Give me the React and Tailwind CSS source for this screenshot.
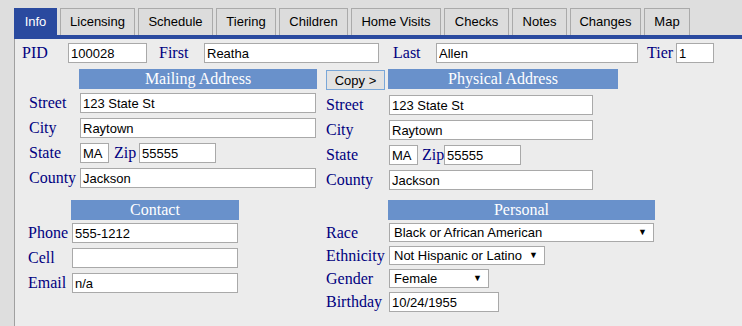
const tabs = [
  { label: 'Info', w: 'w-[43px]', active: true },
  { label: 'Licensing', w: 'w-[75px]' },
  { label: 'Schedule', w: 'w-[75px]' },
  { label: 'Tiering', w: 'w-[60px]' },
  { label: 'Children', w: 'w-[69px]' },
  { label: 'Home Visits', w: 'w-[90px]' },
  { label: 'Checks', w: 'w-[65px]' },
  { label: 'Notes', w: 'w-[55px]' },
  { label: 'Changes', w: 'w-[71px]' },
  { label: 'Map', w: 'w-[46px]' },
]

const serif = "font-['Liberation_Serif','Times_New_Roman',serif]"
const sans = "font-['Liberation_Sans',Arial,sans-serif]"

const Label = ({ children, className = '' }) => (
  <span className={`${serif} text-[16px] leading-[20px] text-[#000080] ${className}`}>{children}</span>
)

const Field = ({ value, className = '' }) => (
  <input
    readOnly
    value={value}
    className={`${sans} h-[20px] border border-[#a9a9a9] bg-white px-[2px] text-[13px] text-black outline-none ${className}`}
  />
)

const Select = ({ value, className = '' }) => (
  <div
    className={`${sans} flex h-[19px] items-center justify-between border border-[#a9a9a9] bg-white pl-[4px] pr-[6px] text-[13px] text-black ${className}`}
  >
    <span>{value}</span>
    <span className="text-[9px] leading-none">▼</span>
  </div>
)

const Header = ({ children, className = '' }) => (
  <div
    className={`${serif} flex h-[20px] items-center justify-center bg-[#6991cb] text-[16px] text-white ${className}`}
  >
    {children}
  </div>
)

const Row = ({ label, labelW, children, className = '' }) => (
  <div className={`flex h-[20px] items-center ${className}`}>
    <Label className={labelW}>{label}</Label>
    {children}
  </div>
)

export default function App() {
  return (
    <div className="flex h-[326px] w-[742px] flex-col overflow-hidden bg-[#dedede] pl-[14px] pt-[8px]">
      <div className="flex h-[27px] gap-[3px]">
        {tabs.map((t) => (
          <div
            key={t.label}
            className={`${sans} ${t.w} flex items-center justify-center border border-b-0 text-[13px] ${
              t.active
                ? 'border-[#2a4a9f] bg-[#2a4a9f] text-white'
                : 'border-[#aaaaaa] bg-[#dcdcdc] text-black'
            }`}
          >
            {t.label}
          </div>
        ))}
      </div>
      <div className="h-[4px] bg-[#2a4a9f]" />
      <div className="flex-1 border-l border-[#a0a0a0] bg-[#ececec] pt-[4px]">
        <div className="flex h-[20px] items-center pl-[7px]">
          <Label className="w-[46px]">PID</Label>
          <Field value="100028" className="w-[79px]" />
          <Label className="ml-[12px] w-[45px]">First</Label>
          <Field value="Reatha" className="w-[175px]" />
          <Label className="ml-[14px] w-[43px]">Last</Label>
          <Field value="Allen" className="w-[202px]" />
          <Label className="ml-[9px] w-[29px]">Tier</Label>
          <Field value="1" className="w-[38px]" />
        </div>

        <div className="flex">
          <div className="w-[311px]">
            <Header className="ml-[64px] mt-[6px] w-[238px]">Mailing Address</Header>
            <div className="mt-[4px] flex flex-col gap-[5px] pl-[14px]">
              <Row label="Street" labelW="w-[51px]">
                <Field value="123 State St" className="w-[236px]" />
              </Row>
              <Row label="City" labelW="w-[51px]">
                <Field value="Raytown" className="w-[236px]" />
              </Row>
              <Row label="State" labelW="w-[51px]">
                <Field value="MA" className="w-[29px]" />
                <Label className="ml-[5px] w-[25px]">Zip</Label>
                <Field value="55555" className="w-[77px]" />
              </Row>
              <Row label="County" labelW="w-[51px]">
                <Field value="Jackson" className="w-[236px]" />
              </Row>
            </div>
            <Header className="ml-[56px] mt-[12px] w-[168px]">Contact</Header>
            <div className="mt-[3px] flex flex-col gap-[5px] pl-[13px]">
              <Row label="Phone" labelW="w-[44px]">
                <Field value="555-1212" className="w-[166px]" />
              </Row>
              <Row label="Cell" labelW="w-[44px]">
                <Field value="" className="w-[166px]" />
              </Row>
              <Row label="Email" labelW="w-[44px]">
                <Field value="n/a" className="w-[166px]" />
              </Row>
            </div>
          </div>

          <div className="flex-1">
            <div className="mt-[6px] flex items-start">
              <button
                className={`${sans} mt-[1px] h-[20px] w-[59px] border border-[#7aa7d8] bg-[#e3e3e3] text-[13px] text-black`}
              >
                Copy &gt;
              </button>
              <Header className="ml-[3px] w-[230px]">Physical Address</Header>
            </div>
            <div className="mt-[5px] flex flex-col gap-[5px]">
              <Row label="Street" labelW="w-[63px]">
                <Field value="123 State St" className="w-[204px]" />
              </Row>
              <Row label="City" labelW="w-[63px]">
                <Field value="Raytown" className="w-[204px]" />
              </Row>
              <Row label="State" labelW="w-[63px]">
                <Field value="MA" className="w-[29px]" />
                <Label className="ml-[4px] w-[22px]">Zip</Label>
                <Field value="55555" className="w-[77px]" />
              </Row>
              <Row label="County" labelW="w-[63px]">
                <Field value="Jackson" className="w-[204px]" />
              </Row>
            </div>
            <Header className="ml-[62px] mt-[10px] w-[267px]">Personal</Header>
            <div className="mt-[3px] flex flex-col gap-[4px]">
              <Row label="Race" labelW="w-[63px]" className="!h-[19px]">
                <Select value="Black or African American" className="w-[265px]" />
              </Row>
              <Row label="Ethnicity" labelW="w-[63px]" className="!h-[19px]">
                <Select value="Not Hispanic or Latino" className="w-[156px]" />
              </Row>
              <Row label="Gender" labelW="w-[63px]" className="!h-[19px]">
                <Select value="Female" className="w-[100px]" />
              </Row>
              <Row label="Birthday" labelW="w-[63px]">
                <Field value="10/24/1955" className="w-[110px]" />
              </Row>
            </div>
          </div>
        </div>
      </div>
    </div>
  )
}
